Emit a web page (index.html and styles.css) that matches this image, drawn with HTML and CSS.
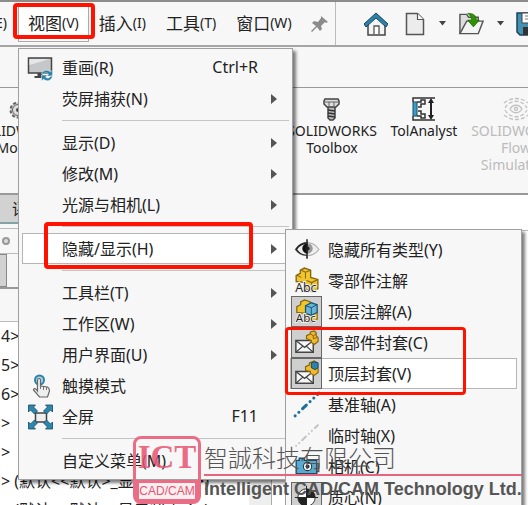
FILE: index.html
```
<!DOCTYPE html>
<html lang="zh-CN">
<head>
  <meta charset="UTF-8" />
  <meta name="viewport" content="width=device-width, initial-scale=1.0" />
  <title>SOLIDWORKS 视图菜单</title>
  <link rel="stylesheet" href="styles.css">
</head>
<body>
  <div class="app">
    <header class="topbar">
      <nav class="menubar">
        <button class="menubar-item clipped" type="button">编辑<small>(E)</small></button>
        <button class="menubar-item open" type="button">视图<small>(V)</small></button>
        <button class="menubar-item" type="button">插入<small>(I)</small></button>
        <button class="menubar-item" type="button">工具<small>(T)</small></button>
        <button class="menubar-item" type="button">窗口<small>(W)</small></button>
        <button class="pin" type="button" aria-label="固定">
          <svg width="18" height="18" viewBox="0 0 18 18"><path d="M10 1l7 6-2 1-1-1-4 4 1 3-2 2-3-4-5 5-1-1 5-5-4-3 2-2 4 1 3-4z" fill="#8b8b8b"/></svg>
        </button>
      </nav>
      <div class="tools">
        <button class="tool" type="button" aria-label="主页">
          <svg width="24" height="24" viewBox="0 0 24 24"><path d="M4 11v12h17V11l-8-8z" fill="#f4f4f4" stroke="#444" stroke-width="1.5"/><path d="M10 22v-8h5v8" fill="#fff" stroke="#555" stroke-width="1.3"/><path d="M0 12L12 1l12 11-2 3-10-9-10 9z" fill="#2e82a8" stroke="#17475f" stroke-width="1"/></svg>
        </button>
        <button class="tool new" type="button" aria-label="新建">
          <svg width="20" height="24" viewBox="0 0 20 24"><path d="M1.5 1.5h11l6 6v15h-17z" fill="#ececec" stroke="#555" stroke-width="1.5"/><path d="M12.5 1.5v6h6" fill="#fff" stroke="#555" stroke-width="1.2"/></svg>
        </button>
        <svg class="drop" width="7" height="5" viewBox="0 0 7 5"><path d="M0 0h7L3.5 4.5z" fill="#444"/></svg>
        <button class="tool" type="button" aria-label="打开">
          <svg width="27" height="24" viewBox="0 0 28 24"><path d="M2 22V2h7l2 3h10v4" fill="#ddd" stroke="#555" stroke-width="1.5"/><path d="M2 22L9 9h17l-5 13z" fill="#f4f4f4" stroke="#555" stroke-width="1.5"/><path d="M11 1c5 0 8 2 8 7h3l-6 7-6-7h4c0-3-1-5-4-7z" fill="#2f9200" stroke="#1c6600" stroke-width=".7"/></svg>
        </button>
        <svg class="drop drop-open" width="7" height="5" viewBox="0 0 7 5"><path d="M0 0h7L3.5 4.5z" fill="#444"/></svg>
        <button class="tool" type="button" aria-label="保存">
          <svg width="24" height="24" viewBox="0 0 24 24"><path d="M1 1h22v22H4l-3-3z" fill="#4491b4" stroke="#1c4358" stroke-width="1.5"/><path d="M6 1h13v10H6z" fill="#fff" stroke="#444"/><path d="M7 15h11v8H7z" fill="#333"/><path d="M9 4h8M9 7h8" stroke="#777"/></svg>
        </button>
      </div>
    </header>
    <div class="strip"></div>

    <section class="ribbon">
      <button class="ribbon-item motion" type="button">
        <svg width="24" height="24" viewBox="0 0 24 24"><path d="M16 2v20" stroke="#276f94" stroke-width="2"/><circle cx="10" cy="13" r="7.5" fill="#ccc" stroke="#666" stroke-width="2" stroke-dasharray="3 2"/><circle cx="10" cy="13" r="5.5" fill="#ddd" stroke="#666"/><circle cx="10" cy="13" r="2" fill="#444"/></svg>
        <span>SOLIDWORKS<br>Motion</span>
      </button>
      <div class="ribbon-right">
        <button class="ribbon-item" type="button">
          <svg width="24" height="24" viewBox="0 0 24 24"><path d="M8 9h7v12l-2 2h-3l-2-2z" fill="#bbb" stroke="#444" stroke-width="1.5"/><path d="M8 13l7 1M8 16l7 1M8 19l7 1" stroke="#333" stroke-width="1.5"/><path d="M5 2h13l1 2v3l-3 3H7L4 7V4z" fill="#ddd" stroke="#444" stroke-width="1.5"/><path d="M4.5 5h14M9 5v4M14 5v4" stroke="#666"/></svg>
          <span>SOLIDWORKS<br>Toolbox</span>
        </button>
        <button class="ribbon-item" type="button">
          <svg width="24" height="24" viewBox="0 0 24 24"><path d="M1 5h4v14H1z" fill="#3e9bc4" stroke="#174f6c"/><path d="M1 5V1h22M1 19v4h22M5 5h4V3h4v4H9v3H6M5 19h4v2h4v-4H9v-3H6" fill="none" stroke="#333" stroke-width="1.5"/><path d="M19 3v18" stroke="#222" stroke-width="2"/><path d="M19 1l3 5h-6zM19 23l3-5h-6z" fill="#222"/></svg>
          <span>TolAnalyst</span>
        </button>
        <button class="ribbon-item" type="button" disabled>
          <svg width="26" height="24" viewBox="0 0 26 24"><g fill="none" stroke="#c2c2c2" stroke-width="1.3"><path d="M7 12c3-5 9-5 12 0-3 5-9 5-12 0z"/><circle cx="13" cy="12" r="1.5"/><path d="M2 11c5-9 17-9 22 0M2 13c5 9 17 9 22 0M1 6c7-6 17-6 24 0M1 18c7 6 17 6 24 0" stroke-dasharray="4 2"/></g></svg>
          <span>SOLIDWORKS<br>Flow<br>Simulation</span>
        </button>
      </div>
    </section>

    <main class="workspace">
      <aside class="side">
        <div class="tab">评估</div>
        <div class="panel-head"><i class="dot"></i></div>
        <div class="panel-tabs"><i class="panel-tab"></i></div>
        <div class="filter"></div>
        <div class="tree">
          <ul>
            <li>4&gt;</li>
            <li>5&gt;</li>
            <li>6&gt;</li>
            <li>&gt;</li>
            <li>&gt;</li>
            <li>&gt; (默认&lt;&lt;默认&gt;_显示状态 1&gt;)</li>
            <li>&gt; (默认&lt;&lt;默认&gt;_显示状态 1&gt;)</li>
          </ul>
          <i class="scroll"></i>
        </div>
      </aside>
      <div class="canvas"></div>
    </main>

    <ul class="menu main-menu">
      <li><button type="button">
        <svg class="icon" width="26" height="26" viewBox="0 0 26 26"><path d="M1 3h23v15H1z" fill="#c5c7c9" stroke="#444" stroke-width="1.5"/><path d="M2 10L22 4H2z" fill="#e6e6e6"/><path d="M10 18h5v3h3v2H7v-2h3z" fill="#444"/><path d="M14 19c1-4 6-5 9-2l2-2v6h-6l2-2c-2-2-4-1-5 0zM25 21c-1 5-6 6-9 3l-2 2v-6h6l-2 2c2 2 4 1 5-1z" fill="#2d82a8" stroke="#f7f7f7" stroke-width=".5"/></svg>
        <span class="label">重画(R)</span><span class="key">Ctrl+R</span></button></li>
      <li><button class="more" type="button"><i class="icon"></i><span class="label">荧屏捕获(N)</span></button></li>
      <li class="sep"></li>
      <li><button class="more" type="button"><i class="icon"></i><span class="label">显示(D)</span></button></li>
      <li><button class="more" type="button"><i class="icon"></i><span class="label">修改(M)</span></button></li>
      <li><button class="more" type="button"><i class="icon"></i><span class="label">光源与相机(L)</span></button></li>
      <li class="sep"></li>
      <li class="has-sub"><button class="more hover" type="button"><i class="icon"></i><span class="label">隐藏/显示(H)</span></button>
        <ul class="menu sub-menu">
          <li><button type="button">
            <svg class="icon" width="30" height="30" viewBox="0 0 30 30"><path d="M4 15c6-9 17-9 23 0-6 8-17 8-23 0z" fill="#eee" stroke="#aaa"/><path d="M4 15c3-5 7-7 11-7v2c-4 0-7 2-9 5 2 3 5 5 9 5v1c-4 0-8-2-11-6z" fill="#222"/><circle cx="16" cy="14" r="5" fill="#999"/><path d="M16 9a5 5 0 0 0 0 10z" fill="#111"/><circle cx="16" cy="14" r="2" fill="#222"/><path d="M15.5 5v19" stroke="#222" stroke-width="1.5"/></svg>
            <span class="label">隐藏所有类型(Y)</span></button></li>
          <li><button type="button">
            <svg class="icon" width="30" height="30" viewBox="0 0 30 30"><path d="M5 16v-6l4-2V5l4-2 6 2v7l7 2v9l-5 3-7-3v-6z" fill="#f1c62d" stroke="#856510" stroke-width="1.3"/><path d="M10 5l4 2 5-2M14 7v6M15 15l5 2 6-3M20 17v8M6 10l4 2" stroke="#856510" fill="none"/><text class="abc" x="4" y="26">Abc</text></svg>
            <span class="label">零部件注解</span></button></li>
          <li><button type="button">
            <svg class="icon pressed" width="30" height="30" viewBox="0 0 30 30"><path d="M5 16v-6l4-2V5l4-2 6 2v7l7 2v9l-5 3-7-3v-6z" fill="#f1c62d" stroke="#856510" stroke-width="1.3"/><path d="M14 9l6-3 6 2v8l-6 3-6-2z" fill="#6ab4d6" stroke="#185575" stroke-width="1.3"/><path d="M14 9l6 2 6-3M20 11v8" fill="none" stroke="#185575"/><text class="abc" x="4" y="26">Abc</text></svg>
            <span class="label">顶层注解(A)</span></button></li>
          <li><button type="button">
            <svg class="icon pressed" width="30" height="30" viewBox="0 0 30 30"><path d="M4 13h18v12H4z" fill="#f6f6f6" stroke="#444" stroke-width="1.5"/><path d="M4 13l9 7 9-7M4 25l7-6M22 25l-7-6" fill="none" stroke="#444" stroke-width="1.3"/><path d="M15 11V8l4-2V4l4-1 2 2v3l2 2v4l-4 3-3-2v-2z" fill="#f1b92d" stroke="#856510" stroke-width="1.2"/><path d="M19 6l3 2 3-2M22 8v3l4-1" fill="none" stroke="#856510"/></svg>
            <span class="label">零部件封套(C)</span></button></li>
          <li><button class="hover" type="button">
            <svg class="icon pressed" width="30" height="30" viewBox="0 0 30 30"><path d="M4 13h18v12H4z" fill="#f6f6f6" stroke="#444" stroke-width="1.5"/><path d="M4 13l9 7 9-7M4 25l7-6M22 25l-7-6" fill="none" stroke="#444" stroke-width="1.3"/><path d="M14 12V8l4-2V4l5-2 3 2v4l1 2v4l-4 3-4-2v-2z" fill="#f1b92d" stroke="#856510" stroke-width="1.2"/><path d="M20 4l3-1 4 1v5l-3 2-4-2z" fill="#2f83aa" stroke="#14445e"/></svg>
            <span class="label">顶层封套(V)</span></button></li>
          <li><button type="button">
            <svg class="icon" width="30" height="30" viewBox="0 0 30 30"><path d="M4 26L27 4" stroke="#236f95" stroke-width="3" stroke-linecap="round" stroke-dasharray="0 5 0 5 5 5"/></svg>
            <span class="label">基准轴(A)</span></button></li>
          <li><button type="button">
            <svg class="icon" width="30" height="30" viewBox="0 0 30 30"><path d="M5 25L26 5" stroke="#c4c4c4" stroke-width="2" stroke-linecap="round" stroke-dasharray="0 4 0 4 5 4"/></svg>
            <span class="label">临时轴(X)</span></button></li>
          <li><button type="button">
            <svg class="icon" width="30" height="30" viewBox="0 0 30 30"><path d="M5 9h3V7h5v2h12v13H5z" fill="#5aa9cf" stroke="#204b60" stroke-width="1.3"/><circle cx="16" cy="15" r="4" fill="#fff" stroke="#234"/><circle cx="16" cy="15" r="2" fill="#234"/><path d="M25 12h2v8h-2z" fill="#888" stroke="#444"/></svg>
            <span class="label">相机(C)</span></button></li>
          <li><button type="button">
            <svg class="icon pressed" width="30" height="30" viewBox="0 0 30 30"><circle cx="15" cy="15" r="9" fill="#fff" stroke="#333"/><path d="M15 15V6a9 9 0 0 1 9 9zM15 15v9a9 9 0 0 1-9-9z" fill="#222"/><path d="M15 3v24M3 15h24" stroke="#222"/></svg>
            <span class="label">质心(N)</span></button></li>
        </ul>
      </li>
      <li class="sep"></li>
      <li><button class="more" type="button"><i class="icon"></i><span class="label">工具栏(T)</span></button></li>
      <li><button class="more" type="button"><i class="icon"></i><span class="label">工作区(W)</span></button></li>
      <li><button class="more" type="button"><i class="icon"></i><span class="label">用户界面(U)</span></button></li>
      <li><button type="button">
        <svg class="icon" width="26" height="26" viewBox="0 0 26 26"><circle cx="12" cy="7" r="4.5" fill="#a9d4e8" stroke="#2c83aa" stroke-width="2"/><path d="M10 18V7c0-2 3-2 3 0v6l7 1c2 1 2 2 2 4l-2 6h-8l-6-7c0-2 2-2 4 1z" fill="#eee" stroke="#666" stroke-width="1.2"/><path d="M13 13v3M16 14v3M19 14v3" stroke="#777"/></svg>
        <span class="label">触摸模式</span></button></li>
      <li><button type="button">
        <svg class="icon" width="26" height="26" viewBox="0 0 26 26"><path d="M8 9h11v9H8z" fill="#eee" stroke="#444" stroke-width="1.5"/><g fill="#2d86ad" stroke="#144962" stroke-width=".8"><path d="M1 1h7L6 3l4 4-3 3-4-4-2 2zM25 1v7l-2-2-4 4-3-3 4-4-2-2zM1 25v-7l2 2 4-4 3 3-4 4 2 2zM25 25h-7l2-2-4-4 3-3 4 4 2-2z"/></g></svg>
        <span class="label">全屏</span><span class="key">F11</span></button></li>
      <li class="sep"></li>
      <li><button type="button"><i class="icon"></i><span class="label">自定义菜单(M)</span></button></li>
    </ul>

    <!-- highlight boxes -->
    <div class="mark mark-view"></div>
    <div class="mark mark-hide"></div>
    <div class="mark mark-envelope"></div>

    <div class="watermark">
      <div class="logo">
        <strong>ICT</strong>
        <span>CAD/CAM</span>
      </div>
      <div class="company">
        <p class="zh">智誠科技有限公司</p>
        <p class="en">Intelligent CAD/CAM Technology Ltd.</p>
      </div>
    </div>
  </div>
</body>
</html>
```

FILE: styles.css
```
* {
  box-sizing: border-box;
}
body {
  margin: 0;
  font-family: "Noto Sans", "Noto Sans CJK SC", sans-serif;
  font-size: 16px;
  color: #222;
}
ul, p {
  margin: 0;
  padding: 0;
  list-style: none;
}
button {
  border: 0;
  padding: 0;
  background: none;
  font: inherit;
  color: inherit;
}
svg {
  display: block;
  flex-shrink: 0;
}
.app {
  position: relative;
  display: flex;
  flex-direction: column;
  height: 100vh;
  overflow: hidden;
  background: #f7f7f7;
}

/* top bar */
.topbar {
  display: flex;
  height: 47px;
  flex-shrink: 0;
  border-top: 2px solid #8c8c8c;
  border-bottom: 2px solid #a5a5a5;
}
.menubar {
  display: flex;
  align-items: center;
  width: 336px;
  flex-shrink: 0;
  border-right: 1px solid #bbb;
}
.menubar-item {
  display: flex;
  align-items: center;
  height: 36px;
  padding: 0 10px 2px;
  font-size: 17px;
  white-space: nowrap;
}
.menubar-item small {
  font-size: 14px;
}
.menubar-item.clipped {
  width: 7px;
  margin-right: 11px;
  padding: 0 0 2px;
  justify-content: flex-end;
  overflow: hidden;
}
.menubar-item.open {
  padding: 0 9px 2px;
  background: #fff;
  border: 1px solid #aaa;
}
.pin {
  margin-left: 9px;
}
.tools {
  display: flex;
  align-items: center;
  flex: 1;
  padding-left: 28px;
  overflow: hidden;
}
.tool {
  flex-shrink: 0;
}
.new {
  margin-left: 17px;
}
.drop {
  margin: 0 12px 0 14px;
}
.drop-open {
  margin-left: 12px;
}
.strip {
  height: 41px;
  flex-shrink: 0;
  border-bottom: 1px solid #999;
}

/* ribbon */
.ribbon {
  display: flex;
  justify-content: space-between;
  height: 107px;
  flex-shrink: 0;
  overflow: hidden;
  border-bottom: 2px solid #999;
}
.ribbon-right {
  display: flex;
  margin-right: -34px;
}
.ribbon-item {
  display: flex;
  flex-direction: column;
  align-items: center;
  gap: 1px;
  width: 92px;
  padding-top: 9px;
  font-size: 14px;
  line-height: 17px;
}
.ribbon-item:disabled {
  color: #bbb;
}
.motion {
  margin-left: -26px;
}

/* document area */
.workspace {
  display: flex;
  flex: 1;
  min-height: 0;
}
.side {
  width: 272px;
  background: #f7f7f7;
  border-right: 1px solid #aaa;
}
.tab {
  height: 29px;
  padding-left: 12px;
  background: #d2d2d2;
  border-bottom: 2px solid #83a3a6;
  line-height: 28px;
}
.panel-head {
  display: flex;
  align-items: center;
  height: 26px;
  margin-top: 4px;
  padding-left: 2px;
  border-top: 1px solid #bbb;
  border-bottom: 1px solid #bbb;
}
.dot {
  width: 8px;
  height: 8px;
  border: 2px solid #999;
  border-radius: 50%;
  background: #ddd;
}
.panel-tabs {
  display: flex;
  align-items: flex-end;
  height: 35px;
  border-bottom: 2px solid #999;
}
.panel-tab {
  width: 7px;
  height: 33px;
  background: #d2d2d2;
  border: 1px solid #888;
  border-left: 0;
}
.filter {
  height: 33px;
  border-bottom: 1px solid #bbb;
}
.tree {
  display: flex;
  justify-content: space-between;
  background: #fff;
}
.tree li {
  height: 29px;
  padding-left: 1px;
  line-height: 29px;
  white-space: nowrap;
}
.scroll {
  width: 22px;
  background: #eee;
}
.canvas {
  flex: 1;
  margin-top: 35px;
  background: #fff;
  border-top: 1px solid #bbb;
  box-shadow: 0 -35px #fff;
}

/* menus */
.menu {
  position: absolute;
  background: #f7f7f7;
  border: 1px solid #a0a0a0;
  box-shadow: 3px 3px 3px rgba(0, 0, 0, 0.5);
}
.main-menu {
  top: 48px;
  left: 18px;
  width: 275px;
  padding: 3px;
}
.menu button {
  display: flex;
  align-items: center;
  gap: 8px;
  width: 100%;
  height: 31px;
  padding: 0 30px 0 4px;
  border: 1px solid transparent;
  white-space: nowrap;
  text-align: left;
}
.menu .icon {
  width: 27px;
  flex-shrink: 0;
}
.label,
.key {
  padding-bottom: 2px;
}
.label {
  flex: 1;
}
.menu .more {
  padding-right: 11px;
}
.menu .more::after {
  content: "";
  border: 5px solid transparent;
  border-left: 6px solid #555;
  border-right: 0;
}
.menu .hover {
  background: #fff;
  border-color: #b5b5b5;
}
.sep {
  height: 13px;
  margin-left: 40px;
  padding-top: 6px;
}
.sep::before {
  content: "";
  display: block;
  border-top: 1px solid #c4c4c4;
}
.has-sub {
  position: relative;
}
.sub-menu {
  top: -4px;
  left: calc(100% - 4px);
  width: 237px;
  padding: 4px;
}
.sub-menu button {
  gap: 6px;
  padding: 0;
}
.sub-menu .icon {
  width: 31px;
  height: 31px;
}
.sub-menu .pressed {
  background: #cfcfcf;
  border: 1px solid #666;
}
.abc {
  font: 12px "Open Sans", sans-serif;
  fill: #222;
  stroke: #eee;
  stroke-width: 2px;
  paint-order: stroke;
}

.mark {
  position: absolute;
  border: 4px solid #ff1200;
  border-radius: 4px;
}
.mark-view {
  top: 3px;
  left: 13px;
  width: 82px;
  height: 36px;
}
.mark-hide {
  top: 222px;
  left: 44px;
  width: 209px;
  height: 47px;
}
.mark-envelope {
  top: 327px;
  left: 285px;
  width: 181px;
  height: 68px;
  border-width: 3px;
}

/* company watermark */
.watermark {
  position: absolute;
  top: 436px;
  left: 133px;
  display: flex;
  gap: 3px;
}
.logo {
  display: flex;
  flex-direction: column;
  width: 68px;
  height: 68px;
  border: 3px solid #ea6d85;
  border-radius: 8px;
  color: #e85470;
  text-align: center;
}
.logo strong {
  height: 41px;
  font: bold 33px/36px "Liberation Serif", serif;
  opacity: 0.85;
}
.logo span {
  flex: 1;
  background: #f9eef0;
  border: 3px solid #ea6d85;
  border-bottom-width: 2px;
  font: 12px/16px "Liberation Sans", sans-serif;
}
.zh {
  height: 40px;
  border-bottom: 2px solid #e5657c;
  font-family: "Noto Sans CJK TC", sans-serif;
  font-size: 24px;
  font-weight: 300;
  line-height: 42px;
  color: #555;
}
.en {
  font: bold 18px/26px "Liberation Sans", sans-serif;
  color: #555;
  white-space: nowrap;
}
```
